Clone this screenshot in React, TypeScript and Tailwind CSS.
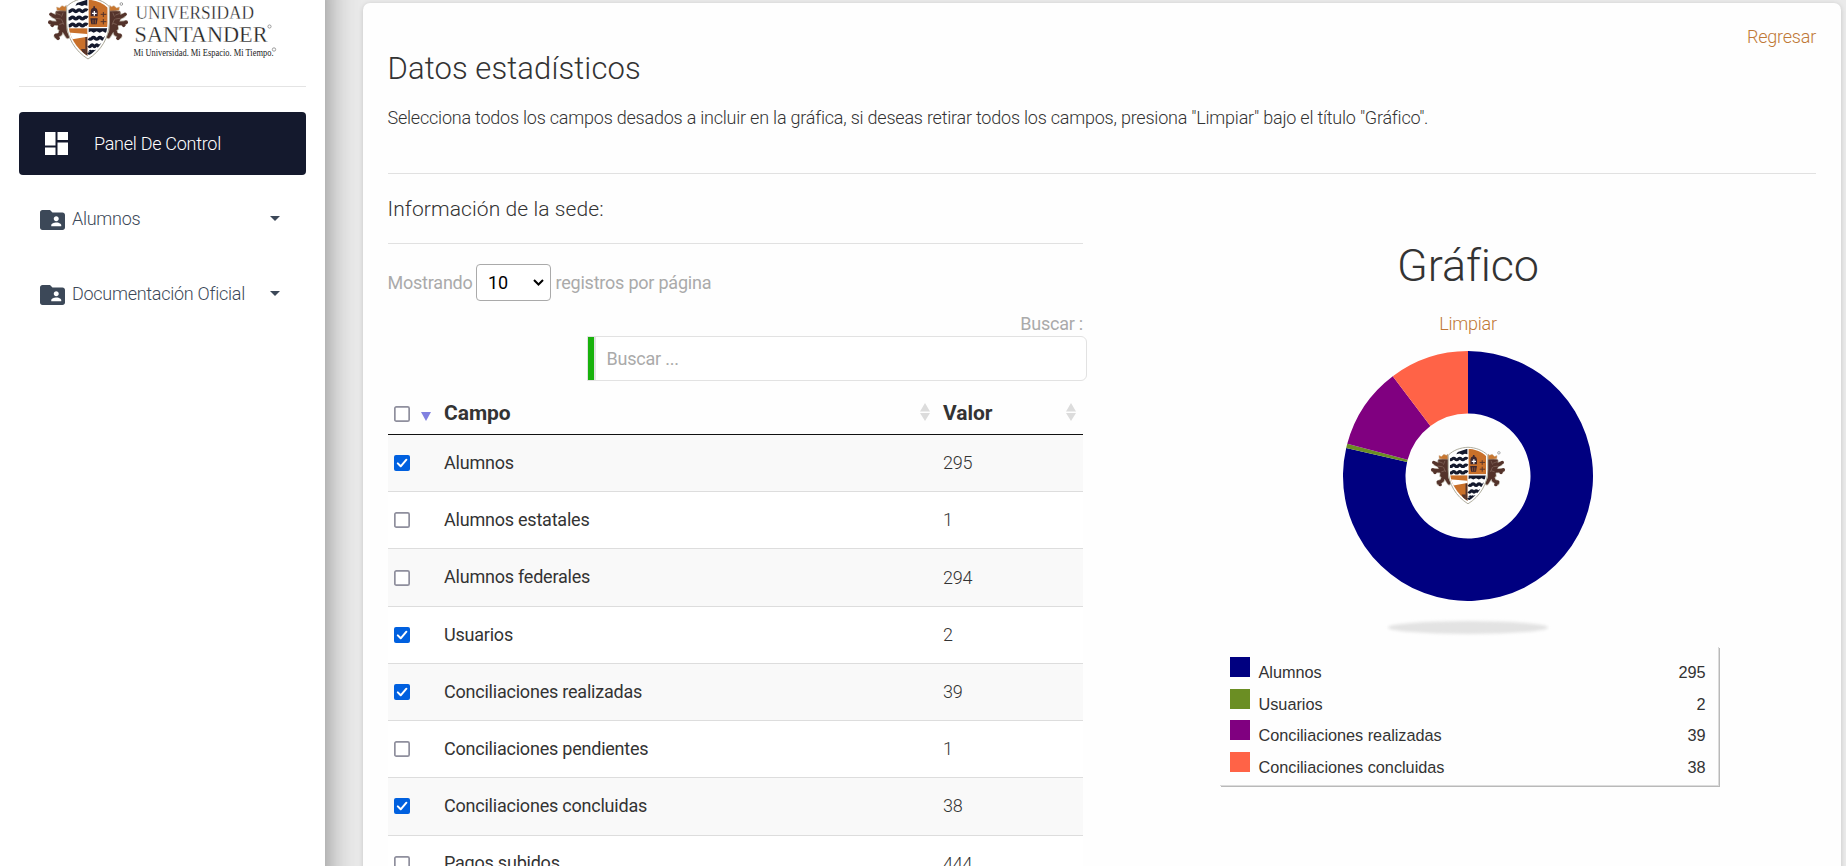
import React from "react";

type Field = { name: string; value: number; checked?: boolean };
type Slice = { name: string; value: number; degrees: number; color: string };

const fields: Field[] = [
  { name: "Alumnos", value: 295, checked: true },
  { name: "Alumnos estatales", value: 1 },
  { name: "Alumnos federales", value: 294 },
  { name: "Usuarios", value: 2, checked: true },
  { name: "Conciliaciones realizadas", value: 39, checked: true },
  { name: "Conciliaciones pendientes", value: 1 },
  { name: "Conciliaciones concluidas", value: 38, checked: true },
  { name: "Pagos subidos", value: 444 },
];

const slices: Slice[] = [
  { name: "Alumnos", value: 295, degrees: 283, color: "#000080" },
  { name: "Usuarios", value: 2, degrees: 2, color: "#6b8e23" },
  { name: "Conciliaciones realizadas", value: 39, degrees: 38, color: "#800080" },
  { name: "Conciliaciones concluidas", value: 38, degrees: 37, color: "#ff6347" },
];

function Wave({ x, y, w }: { x: number; y: number; w: number }) {
  const step = w / 6;
  let d = `M${x} ${y}`;
  for (let i = 0; i < 6; i++) d += ` q${step / 2} ${i % 2 ? -5 : 5} ${step} 0`;
  return <path d={d} fill="none" stroke="#14192d" strokeWidth="10" />;
}

function Lion() {
  const limbs = "M192 46L180 88M184 62L160 50M184 74L156 72M186 88L182 104L170 112M190 90L204 112";
  const mass = "M170 38L200 30V100L182 92L174 74L168 58Z";
  return (
    <g strokeLinecap="round" strokeLinejoin="round">
      <g stroke="#c4beb2" strokeWidth="16" fill="none">
        <path d={limbs} />
      </g>
      <path d={mass} stroke="#c4beb2" strokeWidth="5" fill="#54332b" />
      <path d={limbs} stroke="#54332b" strokeWidth="11" fill="none" />
      <path d={mass} stroke="#54332b" strokeWidth="2" fill="#54332b" />
      <g fill="#54332b">
        <circle cx="154" cy="46" r="5.500" />
        <circle cx="151" cy="70" r="6" />
        <circle cx="158" cy="79" r="5.500" />
        <circle cx="169" cy="109" r="5.500" />
        <circle cx="175" cy="118" r="5.500" />
      </g>
      <path d="M172 34l-1 -10 8 3 8 -7 8 3 5 -4v16z" fill="#c9772f" stroke="#c4ab90" strokeWidth="1.500" />
      <path d="M172 44l10 4M168 58l14 2M180 76l10 -3M190 42l-4 10M186 62l6 14" stroke="#806358" strokeWidth="2.500" fill="none" />
    </g>
  );
}

function Crest({ id, className }: { id: string; className: string }) {
  return (
    <svg viewBox="142 -6 246 192" className={className}>
      <defs>
        <clipPath id={id}>
          <path d="M265 2C245 3 222 10 206 26V70C206 110 228 148 265 172C302 148 324 110 324 70V26C308 10 285 3 265 2Z" />
        </clipPath>
      </defs>
      <Lion />
      <g transform="translate(530 0) scale(-1 1)">
        <Lion />
      </g>
      <path
        d="M265 -3C241 -2 217 6 201 23V70C201 115 226 156 265 180C304 156 329 115 329 70V23C313 6 289 -2 265 -3Z"
        fill="#fff"
        stroke="#a9a696"
        strokeWidth="3"
      />
      <g clipPath={`url(#${id})`}>
        <path d="M263 2V20l-8 -2 -8 3 -10 -4 -10 3 5 -8z" fill="#14192d" />
        <Wave x={204} y={35} w={59} />
        <Wave x={204} y={57} w={59} />
        <Wave x={204} y={78} w={59} />
        <rect x="267" y="0" width="60" height="84" fill="#c9702a" />
        <rect x="204" y="88" width="59" height="90" fill="#c9702a" />
        <path d="M200 100L263 105V113L200 124z" fill="#fff" />
        <path d="M257 114h6v60h-6z" fill="#54332b" />
        <path d="M244 150h14v20h-6z" fill="#54332b" />
        <path d="M267 88h58v10l-8 3 -8 -4 -9 4 -9 -4 -9 4 -8 -4 -7 3z" fill="#14192d" />
        <Wave x={267} y={118} w={58} />
        <Wave x={267} y={140} w={42} />
        <Wave x={267} y={160} w={22} />
        <g fill="#3d2730">
          <path d="M273 36q1 -9 8 -10v-4h5v4q7 1 8 10v16h-21zM272 58h22l-3 18h-16z" />
        </g>
        <path d="M284 36v14M277 43h14" stroke="#fff" strokeWidth="4" />
        <path d="M280 62v12M287 62v12" stroke="#c9702a" strokeWidth="2" />
        <g stroke="#54332b" strokeWidth="3">
          <path d="M311 39v15M303 46h17M311 60v16M303 68h17" />
        </g>
      </g>
      <circle cx="365" cy="15" r="4" fill="none" stroke="#8c8c8c" strokeWidth="2.500" />
    </svg>
  );
}

function Wordmark() {
  return (
    <svg width="152" height="70" className="block shrink-0 overflow-visible" fill="#222" fontFamily="'Liberation Serif', serif">
      <g stroke="#fff" strokeWidth="0.3">
        <text x="2.500" y="18.500" fontSize="17.800" textLength="118.500" lengthAdjust="spacingAndGlyphs">UNIVERSIDAD</text>
        <text x="1.500" y="42" fontSize="23.500" textLength="133" lengthAdjust="spacingAndGlyphs">SANTANDER</text>
      </g>
      <circle cx="136.500" cy="26.500" r="1.600" fill="none" stroke="#777" strokeWidth="0.700" />
      <text x="0.500" y="56" fontSize="10.800" textLength="140" lengthAdjust="spacingAndGlyphs">
        Mi Universidad. Mi Espacio. Mi Tiempo.
      </text>
      <circle cx="141" cy="49.500" r="1.700" fill="none" stroke="#777" strokeWidth="0.700" />
    </svg>
  );
}

function SidebarLink({ label }: { label: string }) {
  return (
    <a className="flex h-[75px] items-center pl-[21px] pr-[26px] text-[#3c4858]">
      <svg width="25" height="20" viewBox="2 4 20 16" className="mt-0.5 shrink-0" fill="#3c4858">
        <path d="M20 6h-8l-2-2H4c-1.100 0-1.990.9-1.990 2L2 18c0 1.100.9 2 2 2h16c1.100 0 2-.9 2-2V8c0-1.100-.9-2-2-2zm-5 3c1.100 0 2 .9 2 2s-.9 2-2 2-2-.9-2-2 .9-2 2-2zm4 8h-8v-1c0-1.330 2.670-2 4-2s4 .67 4 2v1z" />
      </svg>
      <span className="ml-[7px] flex-1 whitespace-nowrap tracking-[-0.27px]">{label}</span>
      <svg width="10" height="5" viewBox="0 0 10 5" fill="#3c4858">
        <path d="M0 0h10L5 5z" />
      </svg>
    </a>
  );
}

function Checkbox({ checked }: { checked?: boolean }) {
  return (
    <svg width="16" height="16" viewBox="0 0 16 16" className="block shrink-0">
      {checked ? (
        <>
          <rect width="16" height="16" rx="2" fill="#0060df" />
          <path d="M3.800 8.400L6.700 11.300L12.400 4.700" fill="none" stroke="#fff" strokeWidth="2" strokeLinecap="round" strokeLinejoin="round" />
        </>
      ) : (
        <rect x="0.85" y="0.85" width="14.300" height="14.300" rx="1.500" fill="#fff" stroke="#8f8f9d" strokeWidth="1.700" />
      )}
    </svg>
  );
}

function SortIcon() {
  return (
    <svg width="10" height="18" viewBox="0 0 10 18" className="-mt-[3px]" fill="#dcdcdc">
      <path d="M0 8.500L5 0l5 8.500zM0 10h10L5 18z" />
    </svg>
  );
}

function Donut() {
  const point = (degrees: number, r: number) => {
    const a = (degrees * Math.PI) / 180;
    return `${125 + r * Math.sin(a)} ${125 - r * Math.cos(a)}`;
  };
  let start = 0;
  return (
    <svg width="250" height="250" className="block">
      {slices.map((s) => {
        const from = start;
        const to = start + s.degrees;
        start = to;
        const large = s.degrees > 180 ? 1 : 0;
        return (
          <path
            key={s.name}
            fill={s.color}
            d={`M${point(from, 125)}A125 125 0 ${large} 1 ${point(to, 125)}L${point(to, 62.5)}A62.5 62.5 0 ${large} 0 ${point(from, 62.5)}Z`}
          />
        );
      })}
    </svg>
  );
}

export default function App() {
  return (
    <div className="flex h-[866px] w-[1846px] overflow-hidden bg-[#eaeaea] font-['Roboto',sans-serif] text-[18px] font-light tracking-[-0.22px] text-[#333]">
      <aside className="-mt-[30px] h-[940px] w-[325px] shrink-0 bg-white px-[19px] pt-[30px] shadow-[0_0_30px_rgba(0,0,0,0.45)]">
        <div className="flex h-[86px] items-start pl-[28px]">
          <Crest id="crest-sidebar" className="-mt-[3px] h-[64px] w-[82px] shrink-0" />
          <div className="ml-[4px] tracking-normal">
            <Wordmark />
          </div>
        </div>
        <div className="h-px w-[287px] bg-[#e4e4e4]" />
        <a className="mt-[25px] flex h-[63px] w-[287px] items-center rounded bg-[#14192d] pl-[26px] text-white">
          <svg width="23" height="23" viewBox="0 0 23 23" fill="#fff">
            <path d="M0 0h10.500v13.500H0zM0 15.500h10.500V23.500H0zM12.500 0H23v8H12.500zM12.500 10.500H23V23.500H12.500z" />
          </svg>
          <span className="ml-[26px] whitespace-nowrap tracking-[-0.27px]">Panel De Control</span>
        </a>
        <nav className="mt-[6px] w-[287px]">
          <SidebarLink label="Alumnos" />
          <SidebarLink label="Documentación Oficial" />
        </nav>
      </aside>

      <main className="ml-[38px] mt-[3px] h-[900px] w-[1478px] shrink-0 rounded-[7px] bg-[#fefefe] px-[25px] pt-[22px] shadow-[0_1px_5px_rgba(0,0,0,0.16)]">
        <div className="text-right leading-6 text-[#bf7836]">
          <a>Regresar</a>
        </div>
        <h1 className="-ml-[0.5px] mt-0.5 text-[31px] leading-9 tracking-[0.1px]">Datos estadísticos</h1>
        <p className="-ml-[0.5px] mt-[19px] whitespace-nowrap leading-6">
          Selecciona todos los campos desados a incluir en la gráfica, si deseas retirar todos los campos, presiona "Limpiar" bajo el título "Gráfico".
        </p>
        <div className="mt-[43px] h-px bg-[#e1e1e1]" />

        <div className="flex gap-[37px]">
          <section className="w-[695px] shrink-0">
            <h2 className="-ml-[0.5px] mt-[21px] text-[21px] leading-7 tracking-[0.1px]">Información de la sede:</h2>
            <div className="mt-5 h-px bg-[#e1e1e1]" />
            <div className="mt-5 flex h-[37px] items-center whitespace-nowrap font-normal text-[#aaa]">
              <span className="-ml-[0.5px] w-[88.5px]">Mostrando</span>
              <div className="flex h-[37px] w-[75px] items-center justify-between rounded border border-[#aaa] bg-white pl-[11px] pr-[6px] text-black">
                <span>10</span>
                <svg width="11" height="7" viewBox="0 0 11 7" fill="none" stroke="#000" strokeWidth="2">
                  <path d="M1 1l4.500 4.500L10 1" />
                </svg>
              </div>
              <span className="ml-[4.500px]">registros por página</span>
            </div>
            <div className="mt-[13px] text-right font-normal leading-5 text-[#aaa]">Buscar :</div>
            <div className="-mr-1 ml-[199px] mt-0.5 flex h-[45px] items-stretch rounded-r-md border border-[#e2e2e2] bg-white">
              <div className="w-[6px] bg-[#18b20c]" />
              <div className="flex items-center border-l-2 border-[#e2e2e2] pl-[10.500px] font-normal text-[#aaa]">Buscar ...</div>
            </div>

            <div className="flex h-[54px] items-center border-b border-[#111] pl-[6px] pr-[7px] pt-[12px] text-[21px] font-bold tracking-[-0.05px]">
              <Checkbox />
              <svg width="10" height="9" viewBox="0 0 10 9" className="ml-[11px] mt-[6px]" fill="#8080e0">
                <path d="M0 0h10L5 9z" />
              </svg>
              <span className="ml-[13px] w-[476px]">Campo</span>
              <SortIcon />
              <span className="ml-[13px] flex-1">Valor</span>
              <SortIcon />
            </div>
            {fields.map((f, i) => (
              <div
                key={f.name}
                className={
                  i % 2 === 0
                    ? "flex h-[57.230px] items-center border-b border-[#ddd] bg-[#f9f9f9] pl-[6px]"
                    : "flex h-[57.230px] items-center border-b border-[#ddd] bg-white pl-[6px]"
                }
              >
                <Checkbox checked={f.checked} />
                <span className="-mt-[1.5px] ml-[34px] w-[499px] font-normal">{f.name}</span>
                <span className="-mt-px">{f.value}</span>
              </div>
            ))}
          </section>

          <section className="flex flex-1 flex-col items-center">
            <h2 className="mt-[66px] text-[45px] leading-[52px] tracking-[-0.1px]">Gráfico</h2>
            <a className="mt-5 leading-6 text-[#bf7836]">Limpiar</a>
            <div className="mt-[15px] grid place-items-center *:col-start-1 *:row-start-1">
              <Donut />
              <Crest id="crest-chart" className="h-[60px] w-[76px]" />
            </div>
            <div className="mt-[20px] h-[13px] w-[160px] rounded-[50%] bg-[#e3e3e3] blur-[1.5px]" />
            <div className="mt-[12px] flex h-[139px] w-[499px] flex-col bg-[#fefefe] pl-[11px] pr-[12px] pt-[11px] font-['Liberation_Sans',Arial,sans-serif] text-[16.3px] font-normal tracking-[-0.02px] shadow-[1px_1px_0_#dcdcdc,2px_2px_0_#b9b9b9]">
              {slices.map((s) => (
                <div key={s.name} className="flex h-[31.700px] items-start leading-[31px]">
                  <div className="h-5 w-5" style={{ backgroundColor: s.color }} />
                  <span className="ml-[9px] flex-1">{s.name}</span>
                  <span>{s.value}</span>
                </div>
              ))}
            </div>
          </section>
        </div>
      </main>
    </div>
  );
}
